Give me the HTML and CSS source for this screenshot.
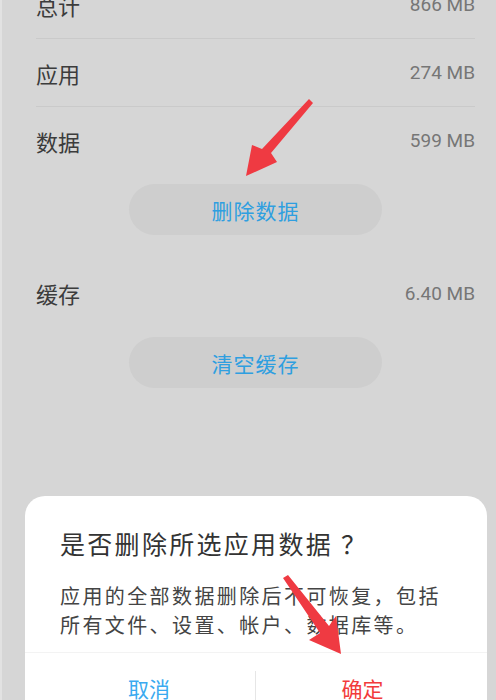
FILE: index.html
```html
<!DOCTYPE html>
<html lang="zh-CN">
<head>
<meta charset="utf-8">
<link rel="stylesheet" href="styles.css">
</head>
<body>
<div class="screen">
  <div class="list">
    <div class="row divided"><span class="label">总计</span><span class="value">866 MB</span></div>
    <div class="row divided"><span class="label">应用</span><span class="value">274 MB</span></div>
    <div class="row data"><span class="label">数据</span><span class="value">599 MB</span></div>
    <div class="btn-wrap first"><div class="pill">删除数据</div></div>
    <div class="row cache"><span class="label">缓存</span><span class="value">6.40 MB</span></div>
    <div class="btn-wrap"><div class="pill">清空缓存</div></div>
  </div>

  <div class="dialog">
    <div class="title">是否删除所选应用数据<span class="qmark">？</span></div>
    <div class="message">应用的全部数据删除后不可恢复，包括<br>所有文件、设置、帐户、数据库等。</div>
    <div class="actions">
      <div class="action cancel">取消</div>
      <div class="action ok">确定</div>
    </div>
  </div>

  <svg class="arrows" width="496" height="700" viewBox="0 0 496 700">
    <polygon fill="#ef3a42" points="309,99 313,103 271,153 277,162 246,176 252,145 262,149"/>
    <polygon fill="#ef3a42" points="283,578 288,575 329,626 336,616 341,654 309,640 320,633"/>
  </svg>
</div>
</body>
</html>
```

FILE: styles.css
```css
html, body {
  margin: 0;
  padding: 0;
}
body {
  background: #d6d6d6;
  font-family: Roboto, "Noto Sans CJK SC", sans-serif;
}
.screen {
  position: relative;
  width: 496px;
  height: 700px;
  overflow: hidden;
  background: #d6d6d6;
  border-left: 2px solid #e2e2e2;
  box-sizing: border-box;
}
.list {
  margin-top: -29px;
  padding: 0 21px 0 34px;
}
.row {
  height: 68px;
  display: flex;
  align-items: center;
  justify-content: space-between;
}
.row.divided {
  border-bottom: 1px solid #cacaca;
  height: 67px;
}
.row.data {
  height: 67px;
}
.label {
  font-family: "Noto Sans CJK SC", sans-serif;
  font-size: 22px;
  color: #3c3c3c;
}
.value {
  font-size: 19px;
  color: #767676;
}
.btn-wrap {
  display: flex;
  justify-content: center;
  padding-top: 10px;
}
.btn-wrap.first {
  padding-bottom: 24px;
}
.pill {
  width: 253px;
  height: 51px;
  border-radius: 26px;
  background: #cecece;
  display: flex;
  align-items: center;
  justify-content: center;
  font-family: "Noto Sans CJK SC", sans-serif;
  font-size: 21px;
  color: #2f9fe0;
  letter-spacing: 1px;
}
.dialog {
  position: absolute;
  left: 23px;
  top: 496px;
  width: 462px;
  height: 240px;
  background: #ffffff;
  border-radius: 20px;
  font-family: "Noto Sans CJK SC", sans-serif;
}
.title {
  padding: 30px 0 0 35px;
  font-size: 25px;
  line-height: 34px;
  letter-spacing: 2.3px;
  color: #333333;
}
.qmark {
  margin-left: 8px;
}
.message {
  padding: 21px 0 0 35px;
  font-size: 20px;
  line-height: 29px;
  letter-spacing: 2.4px;
  color: #444444;
}
.actions {
  margin-top: 13px;
  border-top: 1px solid #f3f3f3;
  padding: 0 18px;
  display: grid;
  grid-template-columns: 1fr 1fr;
  height: 74px;
}
.action {
  display: flex;
  justify-content: center;
  align-items: flex-start;
  font-size: 21px;
  margin-top: 18px;
  padding-top: 2px;
}
.cancel {
  color: #3aaaf0;
  border-right: 1px solid #e6e6e6;
}
.ok {
  color: #f23b3b;
}
.arrows {
  position: absolute;
  left: -2px;
  top: 0;
  pointer-events: none;
}
```
